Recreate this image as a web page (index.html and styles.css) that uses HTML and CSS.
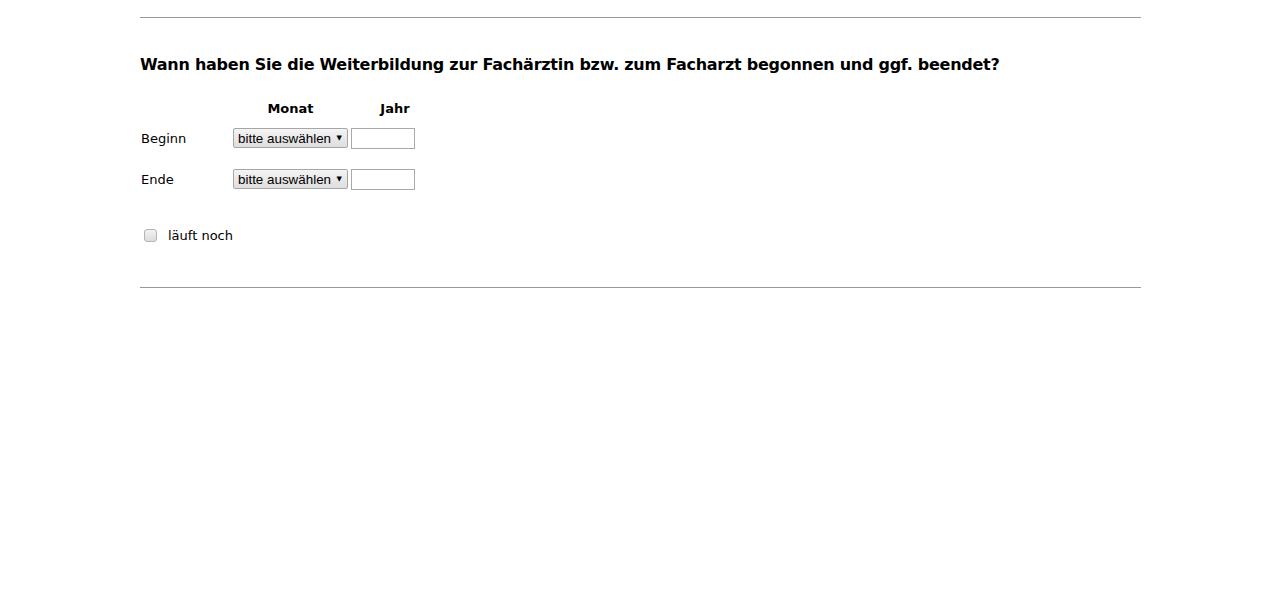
FILE: index.html
```html
<!DOCTYPE html>
<html lang="de">
<head>
    <meta charset="UTF-8">
    <title>Weiterbildung</title>
    <link rel="stylesheet" href="styles.css">
</head>
<body>
    <div class="frage">
        <hr class="trenner">
        <h2>Wann haben Sie die Weiterbildung zur Fachärztin bzw. zum Facharzt begonnen und ggf. beendet?</h2>

        <div class="zeitraum">
            <div></div>
            <div class="kopf">Monat</div>
            <div class="kopf kopf-jahr">Jahr</div>

            <div class="label">Beginn</div>
            <span class="auswahl"><select><option>bitte auswählen</option></select></span>
            <div><input type="text" class="jahr"></div>

            <div class="label">Ende</div>
            <span class="auswahl"><select><option>bitte auswählen</option></select></span>
            <div><input type="text" class="jahr"></div>
        </div>

        <label class="laeuft">
            <input type="checkbox">
            <span>läuft noch</span>
        </label>

        <hr class="trenner">
    </div>
</body>
</html>
```

FILE: styles.css
```css
body {
    margin: 0;
    font-family: "DejaVu Sans", Verdana, sans-serif;
    font-size: 13px;
    color: #000;
    background: #fff;
}
.frage {
    width: 1001px;
    margin-left: 140px;
    padding-top: 17px;
}
.trenner {
    margin: 0;
    border: none;
    border-top: 1px solid #999;
}
h2 {
    font-size: 16px;
    font-weight: bold;
    letter-spacing: -0.26px;
    margin: 37px 0 0 0;
    line-height: 20px;
}
.zeitraum {
    display: grid;
    grid-template-columns: 90px 115px 91px;
    column-gap: 3px;
    align-items: center;
    margin-top: 26px;
}
.kopf {
    font-weight: bold;
    text-align: center;
    height: 27px;
    line-height: 16px;
}
.kopf-jahr {
    padding-right: 3px;
}
.label {
    padding-left: 1px;
    height: 41px;
    line-height: 21px;
}
.zeitraum > .auswahl,
.zeitraum > div:nth-child(3n) {
    align-self: start;
}
.auswahl {
    position: relative;
    display: block;
    width: 115px;
    height: 20px;
}
.auswahl select {
    appearance: none;
    -webkit-appearance: none;
    width: 115px;
    height: 20px;
    margin: 0;
    padding: 0 0 0 4px;
    border: 1px solid #a6a6a6;
    border-radius: 2px;
    background: linear-gradient(#f4f4f4, #dedede);
    font-family: "Liberation Sans", Arial, sans-serif;
    font-size: 13.4px;
    color: #000;
}
/* small triangle in place of the native dropdown arrow */
.auswahl::after {
    content: "\25BC";
    position: absolute;
    right: 6px;
    top: 5px;
    font-size: 7px;
    line-height: 10px;
    pointer-events: none;
}
.jahr {
    box-sizing: border-box;
    width: 64px;
    height: 21px;
    margin: 0;
    border: 1px solid #a9a9a9;
    padding: 0 3px;
    font-family: "Liberation Sans", Arial, sans-serif;
    font-size: 13px;
}
.laeuft {
    display: flex;
    align-items: center;
    gap: 11px;
    margin: 17px 0 44px 4px;
    height: 16px;
}
.laeuft input {
    appearance: none;
    -webkit-appearance: none;
    width: 13px;
    height: 13px;
    margin: 0;
    border: 1px solid #b4b4b4;
    border-radius: 3px;
    background: linear-gradient(#f2f2f2, #dcdcdc);
}
```
